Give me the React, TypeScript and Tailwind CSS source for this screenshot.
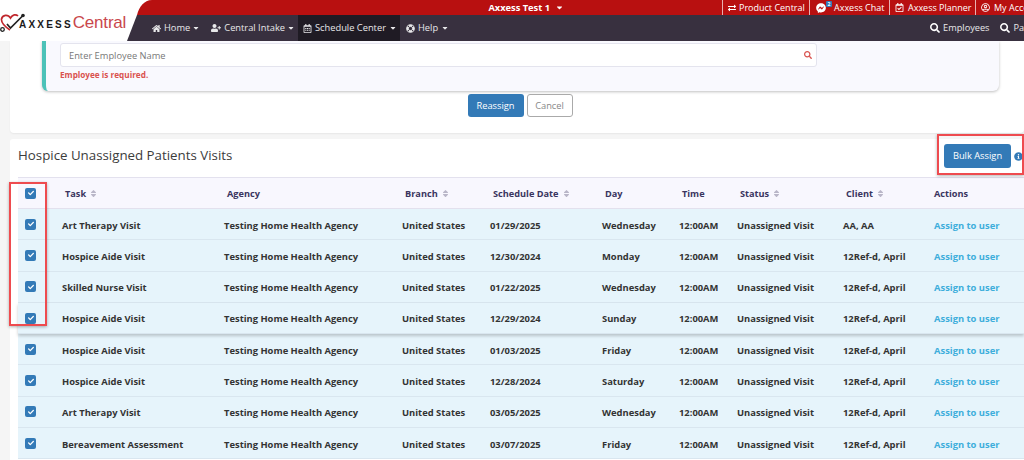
import React from "react";
import { FaHome, FaUserPlus, FaRegCalendarAlt, FaLifeRing, FaSearch, FaFacebookMessenger, FaRegCalendarCheck, FaRegUserCircle, FaInfoCircle, FaSort, FaCheck, FaCaretDown, FaExchangeAlt } from "react-icons/fa";

const rows = [
  ["Art Therapy Visit", "01/29/2025", "Wednesday", "AA, AA"],
  ["Hospice Aide Visit", "12/30/2024", "Monday", "12Ref-d, April"],
  ["Skilled Nurse Visit", "01/22/2025", "Wednesday", "12Ref-d, April"],
  ["Hospice Aide Visit", "12/29/2024", "Sunday", "12Ref-d, April"],
  ["Hospice Aide Visit", "01/03/2025", "Friday", "12Ref-d, April"],
  ["Hospice Aide Visit", "12/28/2024", "Saturday", "12Ref-d, April"],
  ["Art Therapy Visit", "03/05/2025", "Wednesday", "12Ref-d, April"],
  ["Bereavement Assessment", "03/07/2025", "Friday", "12Ref-d, April"],
];

const cols = "grid grid-cols-[44px_162px_178px_88px_112px_77px_58px_106px_91px_90px] items-center";
const cell = "whitespace-nowrap pt-[3px]";

function Check() {
  return (
    <span className="ml-[7px] flex h-[11px] w-[11px] items-center justify-center rounded-[2px] bg-[#337ab7] text-white">
      <FaCheck className="text-[6px]" />
    </span>
  );
}

function NavItem({ icon, label, active, gap, tight }: { icon: React.ReactNode; label: string; active?: boolean; gap: string; tight?: boolean }) {
  return (
    <div className={`flex h-full items-center gap-[3px] ${gap} ${active ? "bg-[#1f1b24]" : ""}`}>
      {icon}
      <span>{label}</span>
      <FaCaretDown className={`text-[8px] ${tight ? "-ml-[1px]" : ""}`} />
    </div>
  );
}

function Head({ label, sort, cls }: { label: string; sort?: boolean; cls?: string }) {
  return (
    <div className={`flex items-center gap-[3px] pt-[2px] ${cls ?? "pl-[3px]"}`}>
      <span>{label}</span>
      {sort && <FaSort className="text-[9px] text-[#b9b6c8]" />}
    </div>
  );
}

export default function App() {
  return (
    <div className="relative flex h-[460px] w-[1024px] flex-col overflow-hidden bg-[#f5f5f5] font-['Open_Sans',sans-serif] text-[9.3px] text-[#333]">
      <header className="z-10 flex h-[41px] shrink-0 bg-white">
        <div className="flex w-[127px] shrink-0 items-center">
          <svg width="26" height="20" viewBox="0 0 26 20" className="mt-[4px] -mr-[7px] shrink-0">
            <path d="M10 17 C4 13 1 10 1.5 6 C2.5 1.5 8 1 10.5 5 C12.5 1.5 16 1 18 3" fill="none" stroke="#c0272d" strokeWidth="1.7" />
            <path d="M7 11 L10.5 15 L23 2.5" fill="none" stroke="#222" strokeWidth="1.7" />
            <circle cx="23" cy="2.5" r="1.8" fill="#222" />
            <circle cx="2.5" cy="16.5" r="1.8" fill="none" stroke="#222" strokeWidth="1.3" />
          </svg>
          <div className="mt-[5px] flex items-baseline whitespace-nowrap font-['Liberation_Sans',sans-serif]">
            <span className="text-[10px] font-bold tracking-[2.2px] text-[#1b1b1b]">AXXESS</span>
            <span className="text-[17px] tracking-[-0.2px] text-[#c9474c]">Central</span>
          </div>
        </div>
        <svg width="25" height="41" viewBox="0 0 25 41" className="shrink-0">
          <path d="M10 15 C12 7 17 0 25 0 L25 15 Z" fill="#b81010" />
          <path d="M0 41 L10 15 L25 15 L25 41 Z" fill="#38303f" />
        </svg>
        <div className="flex min-w-0 flex-1 flex-col">
          <div className="relative flex h-[15px] items-center bg-[#b81010] text-white">
            <div className="flex w-[570px] shrink-0 items-center justify-end pr-[158px] text-[9.3px] font-bold">
              <span className="whitespace-nowrap">Axxess Test 1</span>
              <FaCaretDown className="ml-[5px] text-[9px]" />
            </div>
            <div className="flex h-full items-center whitespace-nowrap text-[9px]">
              <div className="flex h-[15px] w-[87px] items-center gap-[3px] border-l border-[#e8b0b0] pl-[5px]">
                <FaExchangeAlt className="text-[8px]" /><span>Product Central</span>
              </div>
              <div className="relative flex h-[15px] w-[80px] items-center gap-[8px] border-l border-[#e8b0b0] pl-[6px]">
                <FaFacebookMessenger className="text-[10px]" />
                <span>Axxess Chat</span>
                <span className="absolute left-[16px] top-[1px] flex h-[6px] w-[6px] items-center justify-center rounded-[1px] bg-[#337ab7] text-[5px] font-bold leading-none">2</span>
              </div>
              <div className="flex h-[15px] w-[86px] items-center gap-[4px] border-l border-[#e8b0b0] pl-[5px]">
                <FaRegCalendarCheck className="text-[9px]" /><span>Axxess Planner</span>
              </div>
              <div className="flex h-[15px] items-center gap-[4px] border-l border-[#e8b0b0] pl-[5px]">
                <FaRegUserCircle className="text-[9px]" /><span>My Account</span>
              </div>
            </div>
          </div>
          <div className="flex h-[26px] items-center whitespace-nowrap bg-[#38303f] text-[9.3px] text-[#e8e8ea]">
            <NavItem gap="pr-[11px]" tight icon={<FaHome className="text-[9px]" />} label="Home" />
            <NavItem gap="pr-[3px]" tight icon={<FaUserPlus className="text-[10px]" />} label="Central Intake" />
            <NavItem gap="pl-[5px] pr-[3px]" active icon={<FaRegCalendarAlt className="text-[9px]" />} label="Schedule Center" />
            <NavItem gap="pl-[6px]" icon={<FaLifeRing className="text-[9px]" />} label="Help" />
            <div className="ml-[481px] flex items-center gap-[3px] text-[9.2px]"><FaSearch className="text-[10px] text-white" /><span>Employees</span></div>
            <div className="ml-[11px] flex items-center gap-[3px] text-[9.2px]"><FaSearch className="text-[10px] text-white" /><span>Patients</span></div>
          </div>
        </div>
      </header>

      <main className="flex min-h-0 flex-1 flex-col pl-[10px]">
        <section className="h-[92px] shrink-0 rounded-b-[4px] bg-white pl-[32px] pr-[25px] shadow-[0_1px_2px_rgba(0,0,0,0.06)]">
          <div className="h-[50px] rounded-b-[6px] border-l-[4px] border-[#4cc2b8] bg-[#f9f9fe] pl-[14px] pt-[2px] shadow-[0_1px_3px_rgba(0,0,0,0.25)]">
            <div className="flex h-[24px] w-[757px] items-center justify-between rounded-[3px] border border-[#e4e4ee] bg-white pl-[8px] pr-[4px] text-[#777]">
              <span className="pt-[2px]">Enter Employee Name</span>
              <FaSearch className="text-[8px] text-[#d9534f]" />
            </div>
            <div className="mt-[2px] text-[8.2px] font-bold text-[#d9534f]">Employee is required.</div>
          </div>
          <div className="mt-[3px] flex justify-center gap-[3px] pr-[1px]">
            <div className="flex h-[23px] w-[56px] items-center justify-center rounded-[3px] bg-[#337ab7] text-white">Reassign</div>
            <div className="flex h-[23px] w-[46px] items-center justify-center rounded-[3px] border border-[#aaa] bg-white text-[#888]">Cancel</div>
          </div>
        </section>

        <section className="mt-[6px] min-h-0 flex-1 rounded-t-[3px] bg-white pl-[8px]">
          <div className="flex h-[38px] items-center justify-between pb-[4px] pr-[1px]">
            <h2 className="text-[13.3px] font-normal text-[#3c3c3c]">Hospice Unassigned Patients Visits</h2>
            <div className="flex items-center gap-[3px]">
              <div className="flex h-[24px] w-[67px] items-center justify-center rounded-[3px] bg-[#337ab7] text-white">Bulk Assign</div>
              <FaInfoCircle className="text-[9px] text-[#337ab7]" />
            </div>
          </div>
          <div className={`${cols} h-[32px] border-y border-[#e3e1ee] bg-[#f8f7fe] text-[9.2px] font-bold text-[#3a3560]`}>
            <div className="flex"><Check /></div>
            <Head label="Task" sort />
            <Head label="Agency" />
            <Head label="Branch" sort />
            <Head label="Schedule Date" sort />
            <Head label="Day" />
            <Head label="Time" />
            <Head label="Status" sort />
            <Head label="Client" sort />
            <Head label="Actions" cls="pl-0" />
          </div>
          {rows.map((r, i) => (
            <div key={i} className={`${cols} relative h-[31.3px] border-b border-[#d9e6ef] bg-[#e6f4fb] text-[9.4px] font-bold text-[#333] ${i === 3 ? "z-[1] shadow-[0_2px_3px_rgba(0,0,0,0.2)]" : ""}`}>
              <div className="flex"><Check /></div>
              <div className={cell}>{r[0]}</div>
              <div className={cell}>Testing Home Health Agency</div>
              <div className={cell}>United States</div>
              <div className={cell}>{r[1]}</div>
              <div className={cell}>{r[2]}</div>
              <div className={cell}>12:00AM</div>
              <div className={cell}>Unassigned Visit</div>
              <div className={cell}>{r[3]}</div>
              <div className={`${cell} text-[#3eaedb]`}>Assign to user</div>
            </div>
          ))}
        </section>
      </main>

      <div className="absolute left-[9px] top-[182px] z-20 h-[144px] w-[38px] border-2 border-[#ee4b4f] shadow-[0_1px_3px_rgba(0,0,0,0.3)]" />
      <div className="absolute left-[937px] top-[134px] z-20 h-[41px] w-[87px] border-2 border-[#ee4b4f] shadow-[0_1px_3px_rgba(0,0,0,0.3)]" />
    </div>
  );
}
